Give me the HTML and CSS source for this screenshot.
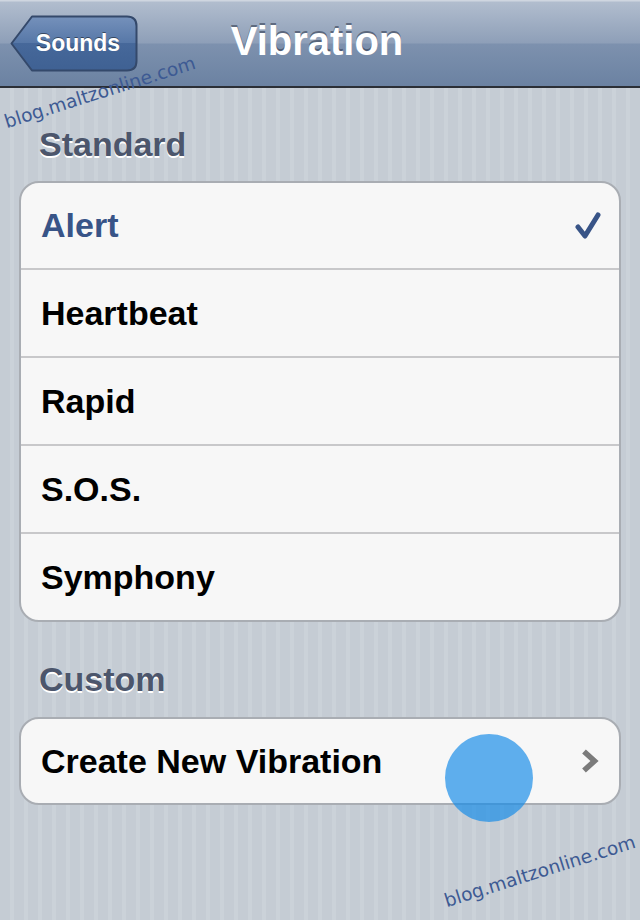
FILE: index.html
```html
<!DOCTYPE html>
<html lang="en">
<head>
  <meta charset="UTF-8" />
  <meta name="viewport" content="width=device-width, initial-scale=1.0"/>
  <title>Vibration</title>
  <link rel="stylesheet" href="styles.css">
</head>
<body>

  <header class="navbar">
    <div class="nav-left">
      <a class="back-btn" href="#">
        <svg class="back-shape" viewBox="0 0 128 57" preserveAspectRatio="none">
          <defs>
            <linearGradient id="backGrad" x1="0" y1="0" x2="0" y2="1">
              <stop offset="0" stop-color="#7591bb"/>
              <stop offset="0.5" stop-color="#5677a7"/>
              <stop offset="0.5" stop-color="#46689a"/>
              <stop offset="1" stop-color="#3f6193"/>
            </linearGradient>
          </defs>
          <path d="M1.5 28.5 L22 1.5 H117 Q126.5 1.5 126.5 11 V46 Q126.5 55.5 117 55.5 H22 Z"
                fill="url(#backGrad)" stroke="#34496b" stroke-width="2" stroke-linejoin="round"/>
        </svg>
        <span class="back-label">Sounds</span>
      </a>
    </div>
    <h1 class="nav-title">Vibration</h1>
    <div class="nav-right"></div>
  </header>

  <main class="content">
    <h2 class="group-title">Standard</h2>
    <ul class="table">
      <li class="row selected">
        <span>Alert</span>
        <svg class="check" viewBox="0 0 26 28">
          <path d="M3 16 L10 25 L23 4" fill="none" stroke="#385487" stroke-width="5" stroke-linecap="round" stroke-linejoin="round"/>
        </svg>
      </li>
      <li class="row"><span>Heartbeat</span></li>
      <li class="row"><span>Rapid</span></li>
      <li class="row"><span>S.O.S.</span></li>
      <li class="row"><span>Symphony</span></li>
    </ul>

    <h2 class="group-title custom">Custom</h2>
    <ul class="table">
      <li class="row single">
        <span>Create New Vibration</span>
        <svg class="chevron" viewBox="0 0 18 24">
          <path d="M3 2.5 L13.5 12 L3 21.5" fill="none" stroke="#7b7b7b" stroke-width="5.5" stroke-linejoin="miter"/>
        </svg>
      </li>
    </ul>
  </main>

  <!-- touch indicator + watermarks sit over the page -->
  <div class="touch"></div>
  <div class="watermark wm-top">blog.maltzonline.com</div>
  <div class="watermark wm-bottom">blog.maltzonline.com</div>

</body>
</html>
```

FILE: styles.css
```css
* {
  margin: 0;
  padding: 0;
  box-sizing: border-box;
}

html, body {
  height: 100%;
}

body {
  width: 640px;
  min-height: 920px;
  font-family: 'Liberation Sans', Arial, sans-serif;
  background: repeating-linear-gradient(to right, #c5ccd4 0, #c5ccd4 10px, #cbd2d9 10px, #cbd2d9 14px);
  position: relative;
  overflow: hidden;
}

/* nav bar */
.navbar {
  height: 88px;
  display: grid;
  grid-template-columns: 1fr auto 1fr;
  align-items: center;
  background: linear-gradient(to bottom, #cfd6e0 0, #cfd6e0 1px, #b1bdce 2px, #8e9fb8 43px, #7d91ae 44px, #6b82a2 86px);
  border-bottom: 2px solid #2b2f36;
}

.nav-left {
  padding-left: 10px;
}

.back-btn {
  position: relative;
  display: inline-flex;
  align-items: center;
  justify-content: center;
  width: 128px;
  height: 57px;
  padding-left: 8px;
  padding-top: 1px;
  text-decoration: none;
}

.back-shape {
  position: absolute;
  inset: 0;
  width: 100%;
  height: 100%;
}

.back-label {
  position: relative;
  color: #fff;
  font-weight: bold;
  font-size: 23px;
  text-shadow: 0 -1px 0 rgba(0, 0, 0, 0.45);
}

.nav-title {
  color: #fff;
  font-size: 40px;
  font-weight: bold;
  margin-bottom: 4px;
  margin-right: 6px;
  text-shadow: 0 -2px 0 rgba(40, 50, 70, 0.55);
}

/* groups */
.content {
  padding: 36px 19px 0;
}

.group-title {
  font-size: 34px;
  line-height: 40px;
  font-weight: bold;
  color: #4c566c;
  padding-left: 20px;
  text-shadow: 0 2px 0 #fff;
  margin-bottom: 17px;
}

.group-title.custom {
  margin-top: 37px;
  margin-bottom: 18px;
}

.table {
  list-style: none;
  background: #f7f7f7;
  border: 2px solid #a9adb3;
  border-radius: 20px;
  overflow: hidden;
}

.row {
  height: 85px;
  display: flex;
  align-items: center;
  justify-content: space-between;
  padding: 0 18px 0 20px;
  font-size: 34px;
  font-weight: bold;
  color: #000;
}

.row + .row {
  height: 88px;
  border-top: 2px solid #c8c8ca;
}

.row.single {
  height: 84px;
}

.row.selected {
  color: #385487;
}

.check {
  width: 26px;
  height: 28px;
  margin-top: -2px;
}

.chevron {
  width: 18px;
  height: 24px;
  margin-right: 2px;
}

/* overlays */
.touch {
  position: absolute;
  left: 445px;
  top: 734px;
  width: 88px;
  height: 88px;
  border-radius: 50%;
  background: rgba(21, 138, 232, 0.68);
}

.watermark {
  position: absolute;
  font-family: 'DejaVu Sans', sans-serif;
  font-size: 18.5px;
  color: #3d5a93;
  transform-origin: left bottom;
  transform: rotate(-17.5deg);
  white-space: nowrap;
}

.wm-top {
  left: 8px;
  top: 111px;
}

.wm-bottom {
  left: 448px;
  top: 890px;
}
```
